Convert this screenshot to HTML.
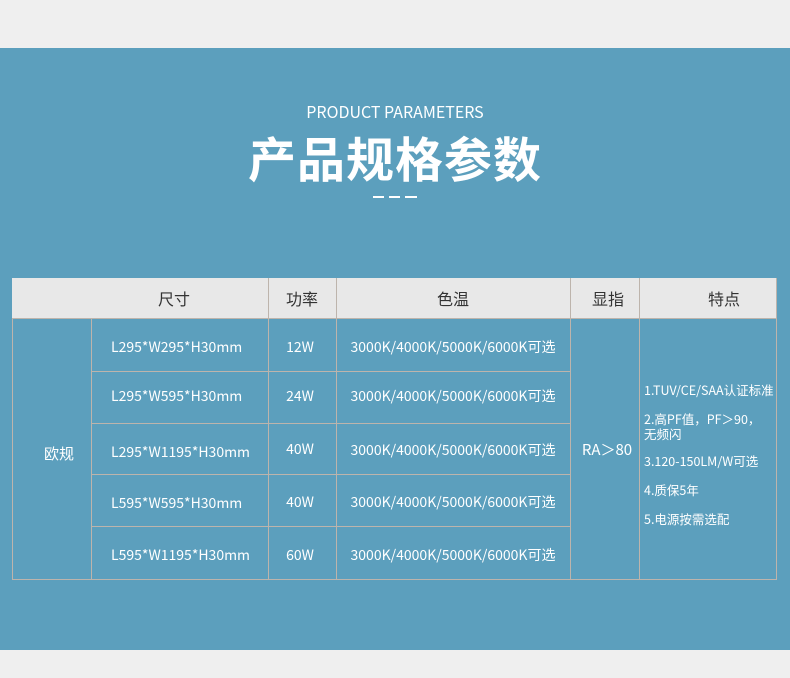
<!DOCTYPE html>
<html><head><meta charset="utf-8"><style>
body{margin:0;width:790px;height:678px;background:#efefef;position:relative;overflow:hidden;font-family:"Noto Sans CJK SC","Liberation Sans",sans-serif;}
.bg{position:absolute;left:0;top:48px;width:790px;height:602px;background:#5c9fbd;}
.t{position:absolute;color:#fff;text-align:center;}
.l{position:absolute;background:#bdb4ac;}
.c{position:absolute;color:#fff;font-size:14px;display:flex;align-items:center;justify-content:center;white-space:nowrap;}
.h{position:absolute;color:#333;font-size:16px;display:flex;align-items:center;justify-content:center;top:278px;height:40px;}
</style></head><body>
<div class="bg"></div>
<div class="t" style="left:0;width:790px;top:99px;font-size:16px;line-height:24px">PRODUCT PARAMETERS</div>
<div class="t" style="left:0;width:790px;top:123px;font-size:48px;font-weight:bold;letter-spacing:1px;line-height:66px">产品规格参数</div>
<div style="position:absolute;top:196px;left:373px;width:11px;height:2px;background:#fff"></div>
<div style="position:absolute;top:196px;left:389px;width:11px;height:2px;background:#fff"></div>
<div style="position:absolute;top:196px;left:405px;width:12px;height:2px;background:#fff"></div>
<div style="position:absolute;left:12px;top:278px;width:765px;height:40px;background:#e8e8e8"></div>
<div class="l" style="left:12px;top:318px;width:765px;height:1px"></div>
<div class="l" style="left:12px;top:579px;width:765px;height:1px"></div>
<div class="l" style="left:91px;top:371px;width:479px;height:1px"></div>
<div class="l" style="left:91px;top:423px;width:479px;height:1px"></div>
<div class="l" style="left:91px;top:474px;width:479px;height:1px"></div>
<div class="l" style="left:91px;top:526px;width:479px;height:1px"></div>
<div class="l" style="left:12px;top:318px;width:1px;height:262px"></div>
<div class="l" style="left:91px;top:318px;width:1px;height:262px"></div>
<div class="l" style="left:268px;top:278px;width:1px;height:302px"></div>
<div class="l" style="left:336px;top:278px;width:1px;height:302px"></div>
<div class="l" style="left:570px;top:278px;width:1px;height:302px"></div>
<div class="l" style="left:639px;top:278px;width:1px;height:302px"></div>
<div class="l" style="left:776px;top:278px;width:1px;height:302px"></div>
<div class="h" style="left:91px;width:166px">尺寸</div>
<div class="h" style="left:268px;width:68px">功率</div>
<div class="h" style="left:336px;width:234px">色温</div>
<div class="h" style="left:570px;width:78px;justify-content:flex-start;padding-left:22px;box-sizing:border-box">显指</div>
<div class="h" style="left:639px;width:170px">特点</div>
<div class="c" style="left:12px;width:94px;top:318px;height:270px;font-size:15px">欧规</div>
<div class="c" style="left:570px;width:74px;top:318px;height:262px;font-size:15px">RA＞80</div>
<div class="c" style="left:111px;top:318px;height:57px">L295*W295*H30mm</div>
<div class="c" style="left:111px;top:371px;height:50px">L295*W595*H30mm</div>
<div class="c" style="left:111px;top:423px;height:58px">L295*W1195*H30mm</div>
<div class="c" style="left:111px;top:475px;height:56px">L595*W595*H30mm</div>
<div class="c" style="left:111px;top:527px;height:56px">L595*W1195*H30mm</div>
<div class="c" style="left:268px;width:64px;top:318px;height:57px">12W</div>
<div class="c" style="left:268px;width:64px;top:371px;height:50px">24W</div>
<div class="c" style="left:268px;width:64px;top:423px;height:52px">40W</div>
<div class="c" style="left:268px;width:64px;top:475px;height:54px">40W</div>
<div class="c" style="left:268px;width:64px;top:527px;height:56px">60W</div>
<div class="c" style="left:336px;width:234px;top:318px;height:57px">3000K/4000K/5000K/6000K可选</div>
<div class="c" style="left:336px;width:234px;top:371px;height:50px">3000K/4000K/5000K/6000K可选</div>
<div class="c" style="left:336px;width:234px;top:423px;height:54px">3000K/4000K/5000K/6000K可选</div>
<div class="c" style="left:336px;width:234px;top:475px;height:54px">3000K/4000K/5000K/6000K可选</div>
<div class="c" style="left:336px;width:234px;top:527px;height:56px">3000K/4000K/5000K/6000K可选</div>
<div style="position:absolute;left:644px;top:382px;color:#fff;font-size:12.5px;line-height:15px;width:135px;white-space:nowrap">
<div>1.TUV/CE/SAA认证标准</div>
<div style="margin-top:14px">2.高PF值，PF＞90，<br>无频闪</div>
<div style="margin-top:12px">3.120-150LM/W可选</div>
<div style="margin-top:14px">4.质保5年</div>
<div style="margin-top:14px">5.电源按需选配</div>
</div>
</body></html>
